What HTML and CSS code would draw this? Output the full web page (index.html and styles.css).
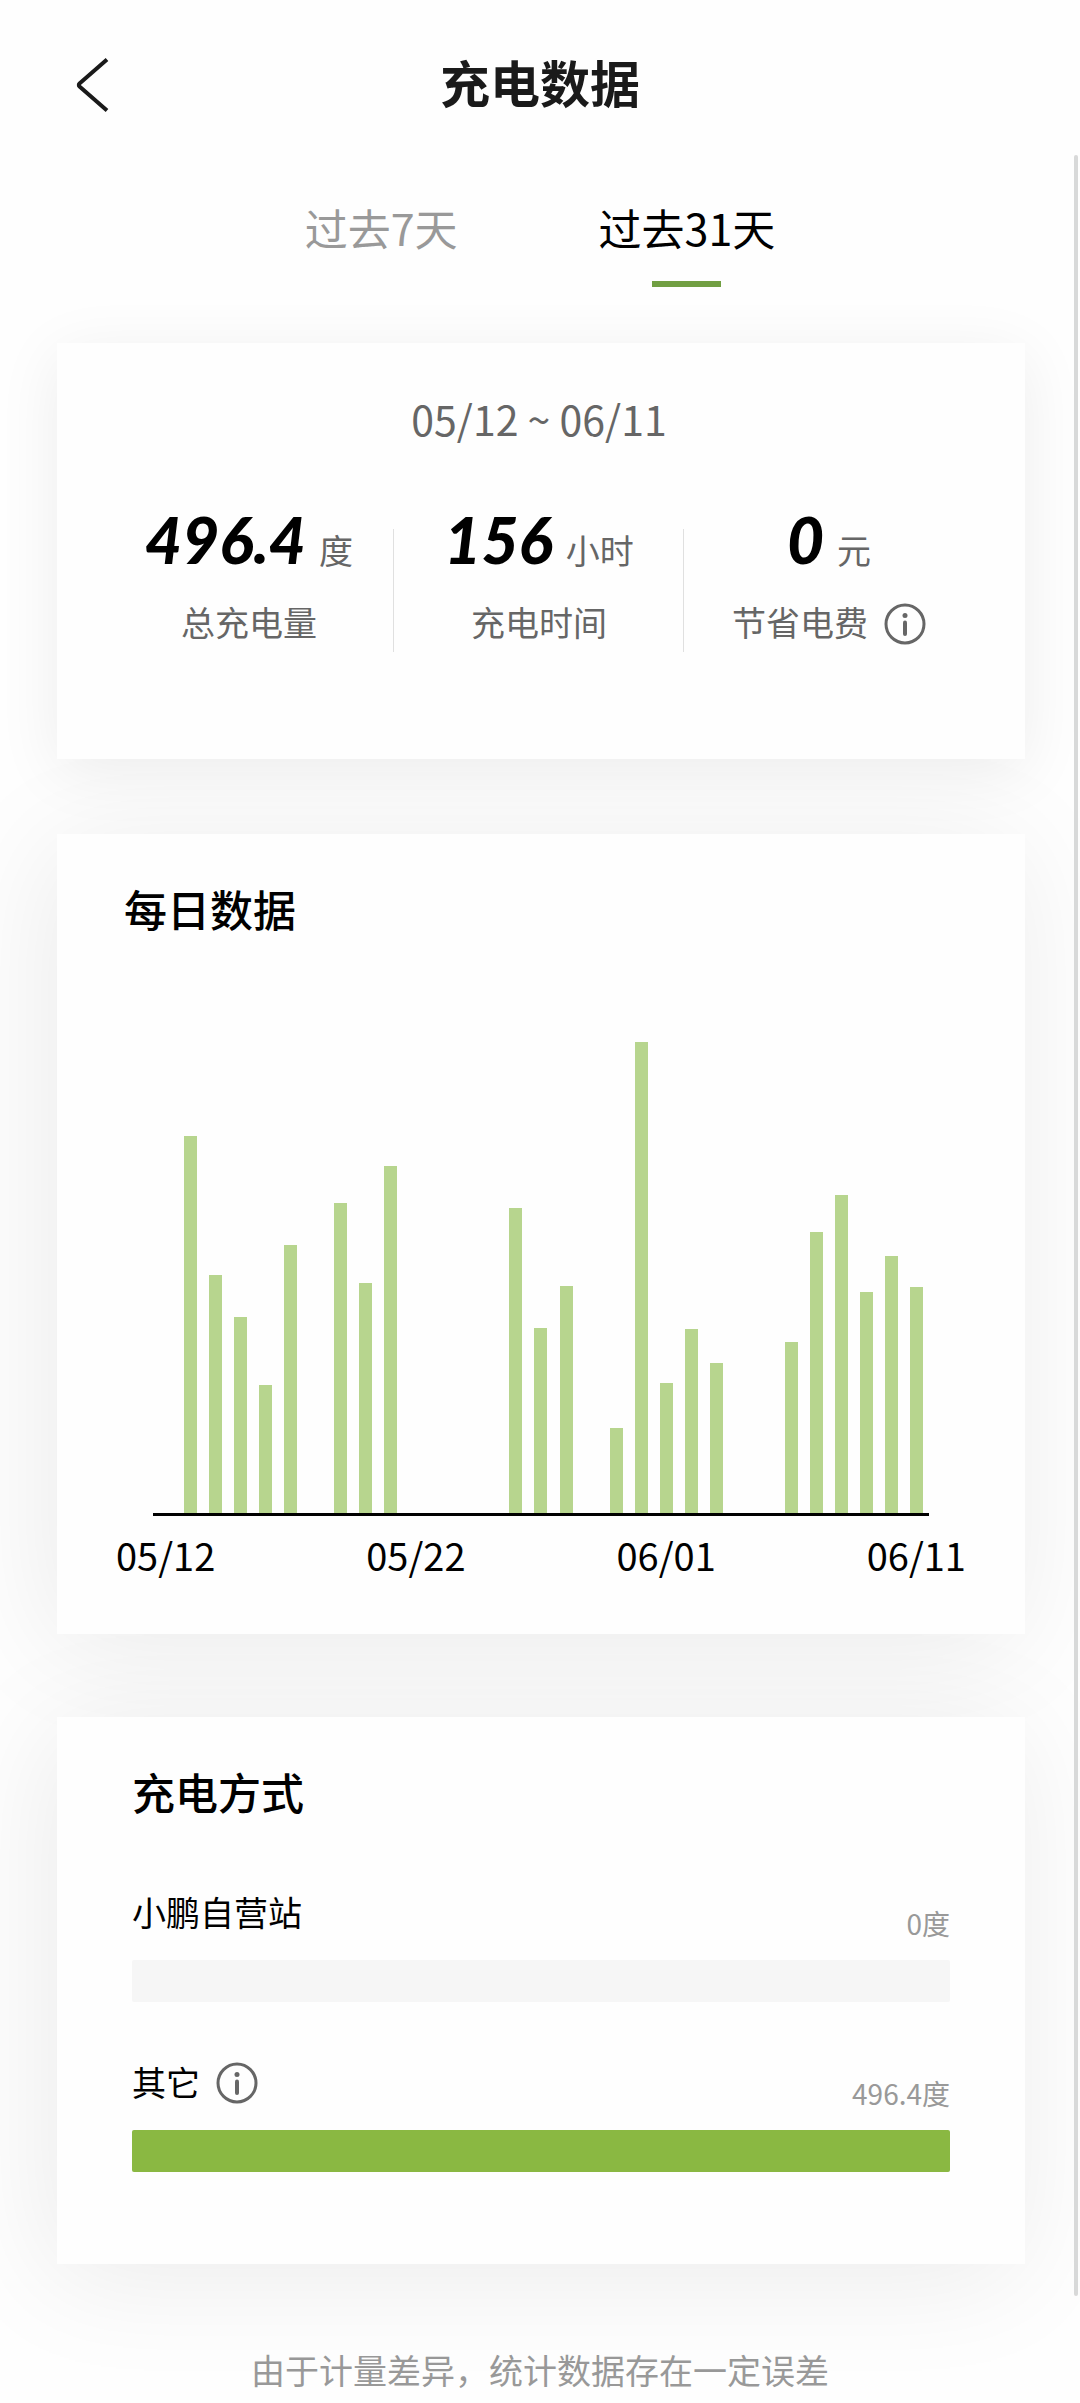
FILE: index.html
```html
<!DOCTYPE html>
<html lang="zh-CN">
<head>
<meta charset="utf-8">
<meta name="viewport" content="width=device-width, initial-scale=1">
<title>充电数据</title>
<link rel="stylesheet" href="styles.css">
</head>
<body>
<header class="topbar">
  <button class="back" type="button" aria-label="返回">
    <svg viewBox="0 0 36 56" width="36" height="56" fill="none" stroke="currentColor" stroke-width="4"><path d="M32 2.500 4.500 26.500a2 2 0 0 0 0 3L32 53.500"/></svg>
  </button>
  <h1 class="topbar-title">充电数据</h1>
</header>

<main class="content">
  <nav class="tabs">
    <button class="tab" type="button">过去7天</button>
    <button class="tab tab-active" type="button">过去31天</button>
  </nav>

  <div class="cards">
    <section class="card summary">
      <p class="range">05/12 ~ 06/11</p>
      <dl class="stats">
        <div class="stat">
          <dd class="stat-value"><strong class="number">496.4</strong><span class="unit">度</span></dd>
          <dt class="stat-label">总充电量</dt>
        </div>
        <div class="stat">
          <dd class="stat-value"><strong class="number">156</strong><span class="unit">小时</span></dd>
          <dt class="stat-label">充电时间</dt>
        </div>
        <div class="stat">
          <dd class="stat-value"><strong class="number">0</strong><span class="unit">元</span></dd>
          <dt class="stat-label">节省电费
            <button class="info" type="button" aria-label="节省电费说明">
              <svg viewBox="0 0 42 42" width="42" height="42"><circle cx="21" cy="21" r="19" fill="none" stroke="currentColor" stroke-width="3"/><circle cx="21" cy="12.500" r="2.500" fill="currentColor"/><path d="M21 19.500v11.500" stroke="currentColor" stroke-width="4" stroke-linecap="round"/></svg>
            </button>
          </dt>
        </div>
      </dl>
    </section>

    <section class="card daily">
      <h2 class="card-title">每日数据</h2>
      <div class="plot">
        <i></i>
        <i class="bar" style="height:377px"></i>
        <i class="bar" style="height:238px"></i>
        <i class="bar" style="height:196px"></i>
        <i class="bar" style="height:128px"></i>
        <i class="bar" style="height:268px"></i>
        <i></i>
        <i class="bar" style="height:310px"></i>
        <i class="bar" style="height:230px"></i>
        <i class="bar" style="height:347px"></i>
        <i></i>
        <i></i>
        <i></i>
        <i></i>
        <i class="bar" style="height:305px"></i>
        <i class="bar" style="height:185px"></i>
        <i class="bar" style="height:227px"></i>
        <i></i>
        <i class="bar" style="height:85px"></i>
        <i class="bar" style="height:471px"></i>
        <i class="bar" style="height:130px"></i>
        <i class="bar" style="height:184px"></i>
        <i class="bar" style="height:150px"></i>
        <i></i>
        <i></i>
        <i class="bar" style="height:171px"></i>
        <i class="bar" style="height:281px"></i>
        <i class="bar" style="height:318px"></i>
        <i class="bar" style="height:221px"></i>
        <i class="bar" style="height:257px"></i>
        <i class="bar" style="height:226px"></i>
      </div>
      <div class="ticks">
        <span>05/12</span>
        <span>05/22</span>
        <span>06/01</span>
        <span>06/11</span>
      </div>
    </section>

    <section class="card methods">
      <h2 class="card-title">充电方式</h2>
      <div class="method">
        <div class="method-head">
          <span class="method-name">小鹏自营站</span>
          <span class="method-value">0度</span>
        </div>
        <div class="track"><div class="fill" style="width:0%"></div></div>
      </div>
      <div class="method">
        <div class="method-head">
          <span class="method-name">其它
            <button class="info" type="button" aria-label="其它说明">
              <svg viewBox="0 0 42 42" width="42" height="42"><circle cx="21" cy="21" r="19" fill="none" stroke="currentColor" stroke-width="3"/><circle cx="21" cy="12.500" r="2.500" fill="currentColor"/><path d="M21 19.500v11.500" stroke="currentColor" stroke-width="4" stroke-linecap="round"/></svg>
            </button>
          </span>
          <span class="method-value">496.4度</span>
        </div>
        <div class="track"><div class="fill" style="width:100%"></div></div>
      </div>
    </section>
  </div>

  <p class="note">由于计量差异，统计数据存在一定误差</p>
  <div class="scroll-thumb"></div>
</main>
</body>
</html>
```

FILE: styles.css
```css
* {
  box-sizing: border-box;
}

body,
h1,
h2,
p,
dl,
dd {
  margin: 0;
}

body {
  background: #fefefe;
  color: #000;
  font-family: "Noto Sans CJK SC", "Noto Sans", sans-serif;
  font-size: 34px;
}

button {
  padding: 0;
  border: 0;
  background: none;
  color: inherit;
  font: inherit;
}

.topbar {
  display: grid;
  grid-template-columns: 1fr auto 1fr;
  align-items: center;
  padding: 45px 75px 38px;
  color: #1a1a1a;
}

.back {
  justify-self: start;
  margin-top: 8px;
}

.back svg,
.info svg {
  display: block;
}

.topbar-title {
  font-size: 50px;
  font-weight: 700;
  line-height: 72px;
}

.content {
  position: relative;
  padding-bottom: 8px;
}

.tabs {
  display: flex;
  justify-content: center;
  gap: 141px;
  padding: 42px 0 56px;
}

.tab {
  display: flex;
  flex-direction: column;
  align-items: center;
  gap: 24px;
  color: #999;
  font-size: 43px;
  line-height: 60px;
}

.tab::after {
  content: "";
  width: 69px;
  height: 6px;
}

.tab-active {
  color: #000;
}

.tab-active::after {
  background: #719f42;
}

.cards {
  isolation: isolate;
  padding: 0 55px 0 57px;
}

.card {
  position: relative;
  border-radius: 2px;
  background: #fefefe;
}

/* Shadows stay beneath every card, so neighbours are not tinted. */
.card::before {
  content: "";
  position: absolute;
  inset: 0;
  z-index: -1;
  box-shadow: -8px 12px 110px rgba(0, 0, 0, 0.08);
}

.summary::before {
  box-shadow: 0 12px 60px rgba(0, 0, 0, 0.07);
}

.summary {
  padding: 45px 51px 107px 47px;
}

.range {
  color: #666;
  font-size: 41px;
  line-height: 60px;
  text-align: center;
}

.stats {
  display: grid;
  grid-template-columns: repeat(3, 1fr);
  margin-top: 52px;
}

.stat {
  position: relative;
  display: flex;
  flex-direction: column;
  align-items: center;
  gap: 20px;
  padding-bottom: 8px;
  color: #666;
}

.stat + .stat::before {
  content: "";
  position: absolute;
  top: 29px;
  bottom: 0;
  left: -1px;
  width: 1px;
  background: #e0e0e0;
}

.stat-value {
  display: flex;
  align-items: baseline;
  gap: 13px;
  height: 80px;
  line-height: 80px;
}

.number {
  color: #000;
  font-family: Lato, "Noto Sans", sans-serif;
  font-size: 64px;
  font-style: italic;
  font-weight: 900;
}

.stat-label {
  display: flex;
  align-items: center;
  gap: 16px;
  height: 44px;
  line-height: 44px;
}

.info {
  margin-top: 4px;
  color: #666;
}

.daily {
  margin-top: 75px;
  padding: 42px 0 54px;
}

.card-title {
  font-size: 43px;
  font-weight: 500;
  line-height: 64px;
}

.daily .card-title {
  padding-left: 67px;
}

.plot {
  display: grid;
  grid-template-columns: repeat(31, 1fr);
  align-items: end;
  justify-items: center;
  height: 474px;
  margin: 102px 96px 0;
  border-bottom: 3px solid #000;
}

.bar {
  width: 13px;
  background: #b7d58e;
}

.ticks {
  display: flex;
  justify-content: space-between;
  margin: 14px 59px 0;
  font-size: 38px;
  line-height: 50px;
}

.methods {
  margin-top: 83px;
  padding: 42px 75px 92px;
}

.method {
  margin-top: 55px;
}

.card-title + .method {
  margin-top: 64px;
}

.method-head {
  display: flex;
  justify-content: space-between;
  height: 52px;
}

.method-name {
  display: flex;
  align-items: center;
  gap: 16px;
  height: 48px;
}

.method-value {
  align-self: flex-end;
  color: #999;
  font-size: 28px;
  line-height: 32px;
}

.track {
  height: 42px;
  margin-top: 21px;
  border-radius: 2px;
  background: #f6f6f6;
}

.fill {
  height: 100%;
  border-radius: 2px;
  background: #8ab842;
}

.note {
  margin-top: 82px;
  color: #999;
  line-height: 48px;
  text-align: center;
}

.scroll-thumb {
  position: absolute;
  top: 0;
  right: 2px;
  bottom: 106px;
  width: 4px;
  border-radius: 2px;
  background: #d8d9d9;
}
```
